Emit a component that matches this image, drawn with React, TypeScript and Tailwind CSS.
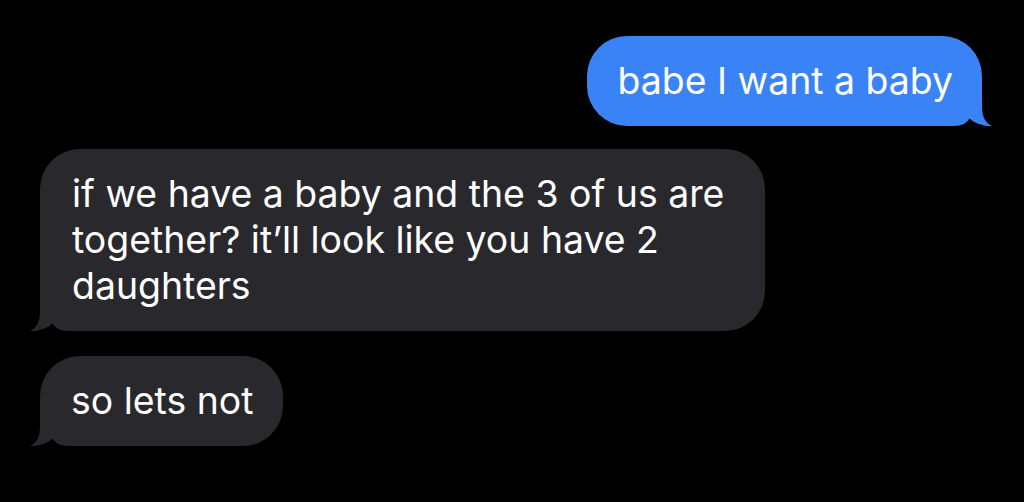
import React from 'react';

type Side = 'left' | 'right';

function Tail({ side, color }: { side: Side; color: string }) {
  // curled tail, drawn over the rounded bottom corner of the bubble
  const pos = side === 'right' ? 'right-[-10px]' : 'left-[-10px] -scale-x-100';
  return (
    <svg
      className={`absolute bottom-0 ${pos}`}
      width="50"
      height="40"
      viewBox="0 0 50 40"
    >
      <path
        d="M0 0 L40 0 L40 20 C40 30 43 37 50 40 C44 40.6 33 38 27.5 32.5 C25 37 20 40 12 40 L0 40 Z"
        fill={color}
      />
    </svg>
  );
}

function Bubble({
  side,
  children,
  className = '',
}: {
  side: Side;
  children: React.ReactNode;
  className?: string;
}) {
  const isMe = side === 'right';
  const color = isMe ? '#3a83f7' : '#29282c';
  return (
    <div
      className={`relative w-fit rounded-[40px] py-[22px] text-[37.4px] leading-[46px] text-white ${
        isMe ? 'self-end bg-[#3a83f7]' : 'self-start bg-[#29282c]'
      } ${className}`}
    >
      <Tail side={side} color={color} />
      <p className="relative">{children}</p>
    </div>
  );
}

export default function App() {
  return (
    <div
      className="w-[1024px] h-[502px] bg-black flex flex-col overflow-hidden pt-[36px]"
      style={{ fontFamily: 'Inter, "Noto Sans", sans-serif' }}
    >
      <Bubble side="right" className="mr-[42px] pl-[31px] pr-[29px]">
        babe I want a baby
      </Bubble>

      <Bubble side="left" className="mt-[23px] ml-[40px] max-w-[725px] pl-[32px] pr-[30px]">
        if we have a baby and the 3 of us are together? it’ll look like you have 2 daughters
      </Bubble>

      <Bubble side="left" className="mt-[25px] ml-[40px] pl-[31px] pr-[30px]">
        so lets not
      </Bubble>
    </div>
  );
}
